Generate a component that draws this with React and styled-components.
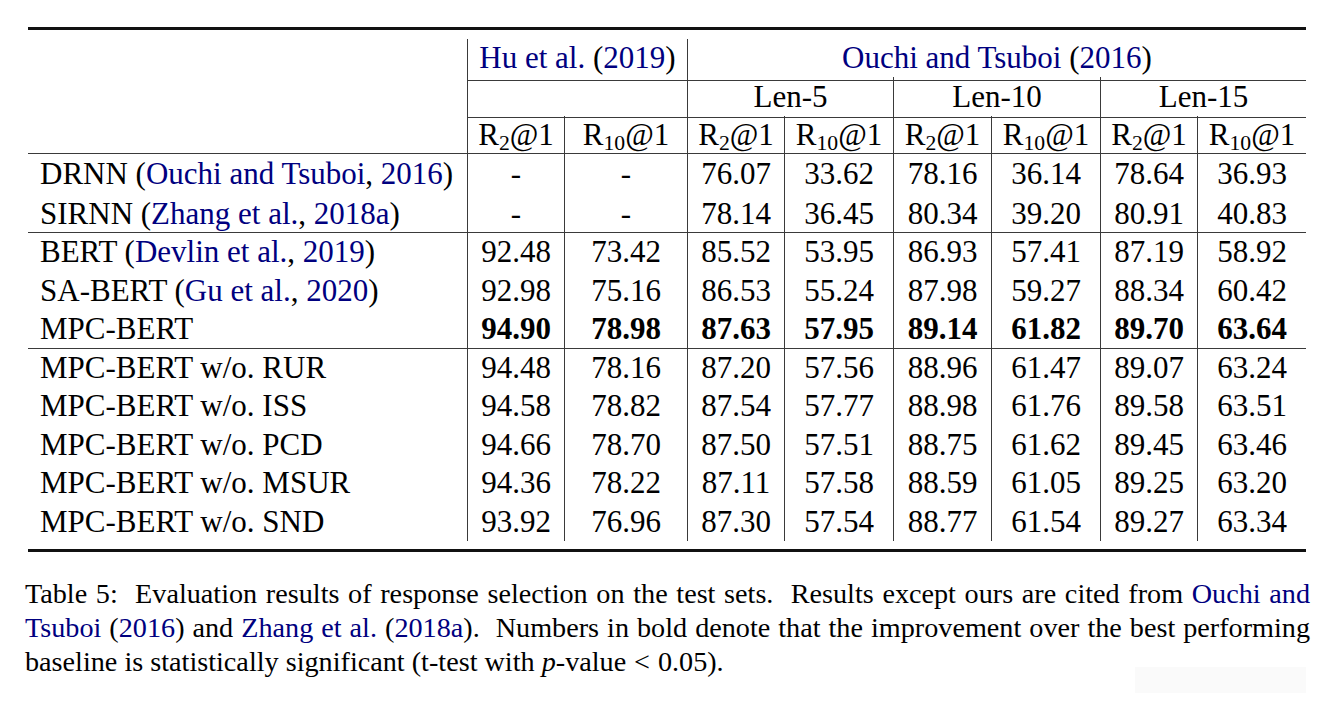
import React from "react";
import styled, { createGlobalStyle } from "styled-components";

const SERIF = `"Liberation Serif", "DejaVu Serif", serif`;

const GlobalStyle = createGlobalStyle`
  html, body { margin: 0; padding: 0; background: #fff; }
  body { font-family: ${SERIF}; color: #000; }
`;

const COLS = "439px 97px 123px 97px 109px 98px 109px 97px 109px";
const LINE = "1px solid #3a3a3a";

const Page = styled.div`
  position: relative;
  width: 1320px;
  height: 702px;
  box-sizing: border-box;
  padding-top: 27px;
  overflow: hidden;
  background: #fff;
  font-family: ${SERIF};
  color: #000;
`;

const Table = styled.div`
  margin-left: 28px;
  width: 1278px;
  font-size: 31px;
  font-family: ${SERIF};
`;

const Rule = styled.div`
  height: 3px;
  background: #111;
`;

const Body = styled.div`
  padding: 9px 0 8px;
`;

const Row = styled.div`
  display: grid;
  grid-template-columns: ${COLS};
  height: ${(p) => p.$h}px;
  box-sizing: border-box;
  border-bottom: ${(p) => (p.$line ? LINE : "none")};
`;

const Cell = styled.div`
  grid-column: span ${(p) => p.$span || 1};
  box-sizing: border-box;
  line-height: ${(p) => p.$h}px;
  padding-bottom: ${(p) => p.$lift || 0}px;
  text-align: ${(p) => (p.$left ? "left" : "center")};
  padding-left: ${(p) => (p.$left ? 12 : 0)}px;
  border-left: ${(p) => (p.$vl ? LINE : "none")};
  border-bottom: ${(p) => (p.$hl ? LINE : "none")};
  font-family: ${SERIF};
  font-weight: ${(p) => (p.$bold ? 700 : 400)};
  white-space: nowrap;
`;

const Cite = styled.span`
  color: #00007f;
`;

const Sub = styled.sub`
  font-size: 0.7em;
  vertical-align: -0.22em;
  line-height: 0;
`;

const Caption = styled.div`
  margin: 25px 0 0 25px;
  width: 1285px;
  font-size: 28.2px;
  line-height: 34px;
  font-family: ${SERIF};
`;

const CapLine = styled.div`
  text-align: ${(p) => (p.$justify ? "justify" : "left")};
  text-align-last: ${(p) => (p.$justify ? "justify" : "left")};
  white-space: ${(p) => (p.$justify ? "normal" : "nowrap")};
`;

const MathLt = styled.span`
  margin: 0 0.28em;
`;

const Smudge = styled.div`
  position: absolute;
  left: 1135px;
  top: 667px;
  width: 171px;
  height: 26px;
  background: #fafafa;
`;

const R2 = () => (
  <>
    R<Sub>2</Sub>@1
  </>
);
const R10 = () => (
  <>
    R<Sub>10</Sub>@1
  </>
);

const groups = [
  {
    h: 39.5,
    rows: [
      {
        label: (
          <>
            DRNN (<Cite>Ouchi and Tsuboi</Cite>, <Cite>2016</Cite>)
          </>
        ),
        vals: ["-", "-", "76.07", "33.62", "78.16", "36.14", "78.64", "36.93"],
      },
      {
        label: (
          <>
            SIRNN (<Cite>Zhang et al.</Cite>, <Cite>2018a</Cite>)
          </>
        ),
        vals: ["-", "-", "78.14", "36.45", "80.34", "39.20", "80.91", "40.83"],
      },
    ],
  },
  {
    h: 38.67,
    rows: [
      {
        label: (
          <>
            BERT (<Cite>Devlin et al.</Cite>, <Cite>2019</Cite>)
          </>
        ),
        vals: ["92.48", "73.42", "85.52", "53.95", "86.93", "57.41", "87.19", "58.92"],
      },
      {
        label: (
          <>
            SA-BERT (<Cite>Gu et al.</Cite>, <Cite>2020</Cite>)
          </>
        ),
        vals: ["92.98", "75.16", "86.53", "55.24", "87.98", "59.27", "88.34", "60.42"],
      },
      {
        label: "MPC-BERT",
        bold: true,
        vals: ["94.90", "78.98", "87.63", "57.95", "89.14", "61.82", "89.70", "63.64"],
      },
    ],
  },
  {
    h: 38.4,
    rows: [
      {
        label: "MPC-BERT w/o. RUR",
        vals: ["94.48", "78.16", "87.20", "57.56", "88.96", "61.47", "89.07", "63.24"],
      },
      {
        label: "MPC-BERT w/o. ISS",
        vals: ["94.58", "78.82", "87.54", "57.77", "88.98", "61.76", "89.58", "63.51"],
      },
      {
        label: "MPC-BERT w/o. PCD",
        vals: ["94.66", "78.70", "87.50", "57.51", "88.75", "61.62", "89.45", "63.46"],
      },
      {
        label: "MPC-BERT w/o. MSUR",
        vals: ["94.36", "78.22", "87.11", "57.58", "88.59", "61.05", "89.25", "63.20"],
      },
      {
        label: "MPC-BERT w/o. SND",
        vals: ["93.92", "76.96", "87.30", "57.54", "88.77", "61.54", "89.27", "63.34"],
      },
    ],
  },
];

export default function App() {
  return (
    <>
      <GlobalStyle />
      <Page>
        <Table>
          <Rule />
          <Body>
            <Row $h={38}>
              <Cell $h={38} $lift={3} $left />
              <Cell $h={38} $lift={3} $span={2} $vl $hl>
                <Cite>Hu et al.</Cite> (<Cite>2019</Cite>)
              </Cell>
              <Cell $h={38} $lift={3} $span={6} $vl $hl>
                <Cite>Ouchi and Tsuboi</Cite> (<Cite>2016</Cite>)
              </Cell>
            </Row>
            <Row $h={39}>
              <Cell $h={39} $lift={1} $left />
              <Cell $h={39} $lift={1} $span={2} $vl $hl />
              <Cell $h={39} $lift={1} $span={2} $vl $hl>
                Len-5
              </Cell>
              <Cell $h={39} $lift={1} $span={2} $vl $hl>
                Len-10
              </Cell>
              <Cell $h={39} $lift={1} $span={2} $vl $hl>
                Len-15
              </Cell>
            </Row>
            <Row $h={38} $line>
              <Cell $h={38} $left />
              {[0, 1, 2, 3].map((i) => (
                <React.Fragment key={i}>
                  <Cell $h={38} $lift={1} $vl>
                    <R2 />
                  </Cell>
                  <Cell $h={38} $lift={1} $vl>
                    <R10 />
                  </Cell>
                </React.Fragment>
              ))}
            </Row>
            {groups.map((g, gi) =>
              g.rows.map((r, ri) => (
                <Row
                  key={`${gi}-${ri}`}
                  $h={g.h}
                  $line={gi < groups.length - 1 && ri === g.rows.length - 1}
                >
                  <Cell $h={g.h} $left>
                    {r.label}
                  </Cell>
                  {r.vals.map((v, vi) => (
                    <Cell key={vi} $h={g.h} $vl $bold={r.bold}>
                      {v}
                    </Cell>
                  ))}
                </Row>
              ))
            )}
          </Body>
          <Rule />
        </Table>
        <Caption>
          <CapLine $justify>
            Table 5:&nbsp; Evaluation results of response selection on the test sets.&nbsp; Results
            except ours are cited from <Cite>Ouchi and</Cite>
          </CapLine>
          <CapLine $justify>
            <Cite>Tsuboi</Cite> (<Cite>2016</Cite>) and <Cite>Zhang et al.</Cite> (<Cite>2018a</Cite>).&nbsp;
            Numbers in bold denote that the improvement over the best performing
          </CapLine>
          <CapLine>
            baseline is statistically significant (t-test with <i>p</i>-value<MathLt>&lt;</MathLt>0.05).
          </CapLine>
        </Caption>
        <Smudge />
      </Page>
    </>
  );
}
